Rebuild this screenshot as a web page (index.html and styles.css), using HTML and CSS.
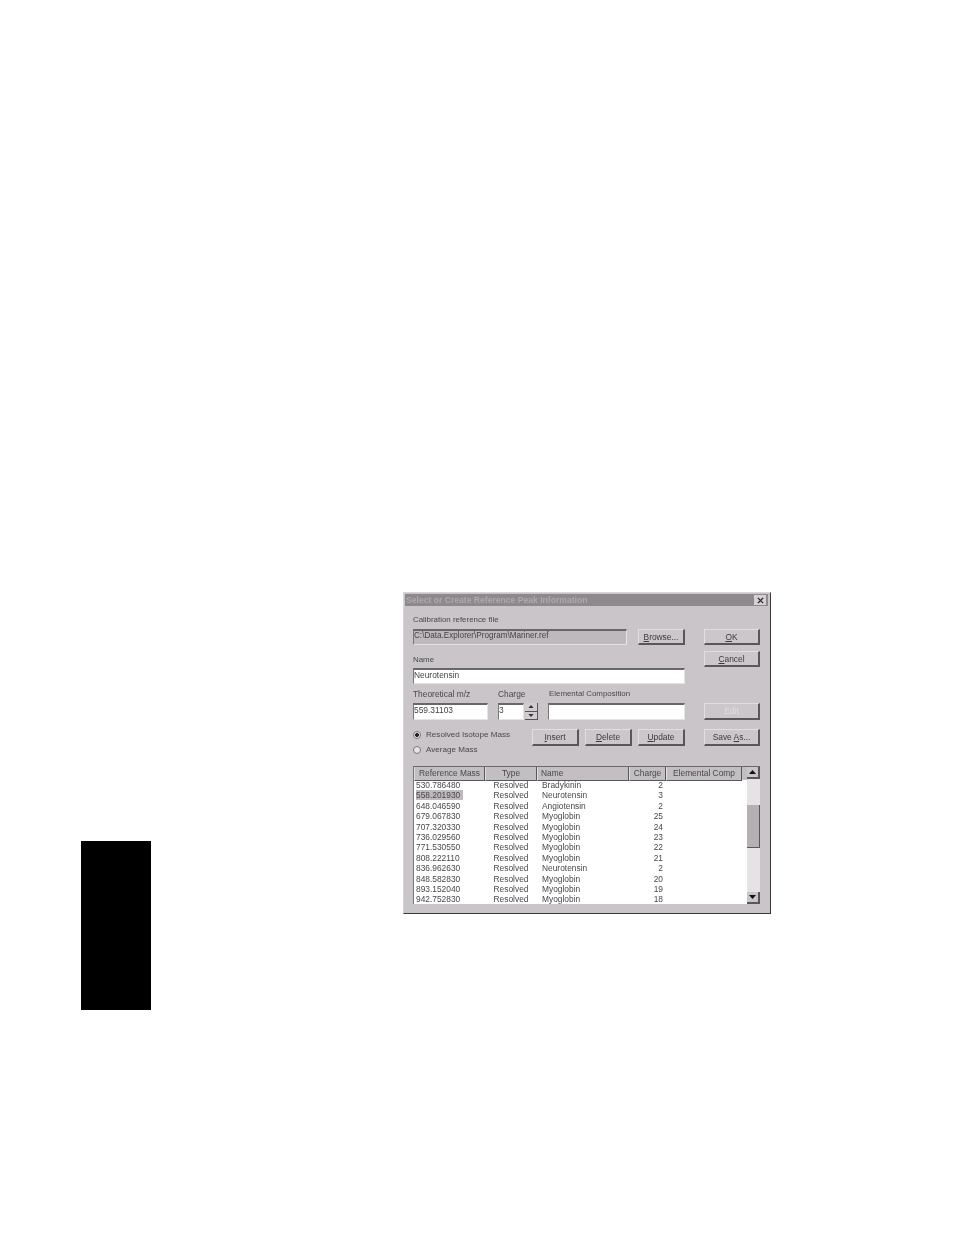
FILE: index.html
```html
<!DOCTYPE html>
<html lang="en">
<head>
<meta charset="utf-8">
<title>Select or Create Reference Peak Information</title>
<link rel="stylesheet" href="styles.css">
</head>
<body>
<main class="page">
  <div class="tab"></div>
  <section class="dialog">
    <header class="titlebar">
      <span class="title">Select or Create Reference Peak Information</span>
      <span class="close"><svg viewBox="0 0 8 8" width="7" height="7"><path d="M1 1L7 7M7 1L1 7" stroke="#222" stroke-width="1.5"/></svg></span>
    </header>
    <div class="body">
      <div class="top">
        <div class="form">
          <label class="lbl lbl-file lbl-narrow">Calibration reference file</label>
          <div class="row row-file">
            <div class="field field-file">C:\Data.Explorer\Program\Mariner.ref</div>
            <button class="btn"><u>B</u>rowse...</button>
          </div>
          <label class="lbl lbl-name lbl-narrow">Name</label>
          <div class="field field-name">Neurotensin</div>
          <div class="row row-labels">
            <span class="lbl col-mz">Theoretical m/z</span>
            <span class="lbl col-charge">Charge</span>
            <span class="lbl lbl-narrow lbl-comp">Elemental Composition</span>
          </div>
          <div class="row row-inputs">
            <div class="field col-mz">559.31103</div>
            <div class="charge-box">
              <div class="field field-charge">3</div>
              <div class="spin">
                <span class="spin-btn"><svg viewBox="0 0 7 4" width="6" height="3"><path d="M3.5 0L7 4H0Z" fill="#333"/></svg></span>
                <span class="spin-btn"><svg viewBox="0 0 7 4" width="6" height="3"><path d="M0 0H7L3.5 4Z" fill="#333"/></svg></span>
              </div>
            </div>
            <div class="field field-comp"></div>
          </div>
          <div class="row row-actions">
            <div class="radios">
              <div class="radio-row"><span class="radio on"></span>Resolved Isotope Mass</div>
              <div class="radio-row"><span class="radio"></span>Average Mass</div>
            </div>
            <div class="actions">
              <button class="btn"><u>I</u>nsert</button>
              <button class="btn"><u>D</u>elete</button>
              <button class="btn"><u>U</u>pdate</button>
            </div>
          </div>
        </div>
        <div class="side">
          <button class="btn btn-wide"><u>O</u>K</button>
          <button class="btn btn-wide"><u>C</u>ancel</button>
          <button class="btn btn-wide btn-off">Edit</button>
          <button class="btn btn-wide">Save <u>A</u>s...</button>
        </div>
      </div>
      <div class="list">
        <div class="list-main">
          <div class="thead">
            <span class="th">Reference Mass</span><span class="th">Type</span><span class="th th-left">Name</span><span class="th">Charge</span><span class="th">Elemental Comp</span>
          </div>
          <div class="tbody">
            <div class="tr"><span class="mass">530.786480</span><span class="type">Resolved</span><span class="name">Bradykinin</span><span class="chg">2</span></div>
            <div class="tr"><span class="mass"><span class="sel">558.201930</span></span><span class="type">Resolved</span><span class="name">Neurotensin</span><span class="chg">3</span></div>
            <div class="tr"><span class="mass">648.046590</span><span class="type">Resolved</span><span class="name">Angiotensin</span><span class="chg">2</span></div>
            <div class="tr"><span class="mass">679.067830</span><span class="type">Resolved</span><span class="name">Myoglobin</span><span class="chg">25</span></div>
            <div class="tr"><span class="mass">707.320330</span><span class="type">Resolved</span><span class="name">Myoglobin</span><span class="chg">24</span></div>
            <div class="tr"><span class="mass">736.029560</span><span class="type">Resolved</span><span class="name">Myoglobin</span><span class="chg">23</span></div>
            <div class="tr"><span class="mass">771.530550</span><span class="type">Resolved</span><span class="name">Myoglobin</span><span class="chg">22</span></div>
            <div class="tr"><span class="mass">808.222110</span><span class="type">Resolved</span><span class="name">Myoglobin</span><span class="chg">21</span></div>
            <div class="tr"><span class="mass">836.962630</span><span class="type">Resolved</span><span class="name">Neurotensin</span><span class="chg">2</span></div>
            <div class="tr"><span class="mass">848.582830</span><span class="type">Resolved</span><span class="name">Myoglobin</span><span class="chg">20</span></div>
            <div class="tr"><span class="mass">893.152040</span><span class="type">Resolved</span><span class="name">Myoglobin</span><span class="chg">19</span></div>
            <div class="tr"><span class="mass">942.752830</span><span class="type">Resolved</span><span class="name">Myoglobin</span><span class="chg">18</span></div>
          </div>
        </div>
        <div class="scroll">
          <span class="sb-btn"><svg viewBox="0 0 7 4" width="7" height="4"><path d="M3.5 0L7 4H0Z" fill="#111"/></svg></span>
          <div class="track"><span class="thumb"></span></div>
          <span class="sb-btn"><svg viewBox="0 0 7 4" width="7" height="4"><path d="M0 0H7L3.5 4Z" fill="#111"/></svg></span>
        </div>
      </div>
    </div>
  </section>
</main>
</body>
</html>
```
FILE: styles.css
```css
* { box-sizing: border-box; }
html, body { margin: 0; padding: 0; background: #fff; }
body { width: 954px; height: 1235px; overflow: hidden; }
.page { display: flex; align-items: flex-start; padding: 592px 0 0 81px; }
.tab { width: 70px; height: 169px; margin-top: 249px; background: #000; }
.dialog {
  width: 368px; height: 322px; margin-left: 252px; padding: 1px 2px 2px 1px;
  background: #c9c5c9;
  border: 1px solid #d8d4d8; border-right-color: #3a383a; border-bottom-color: #3a383a;
  font: 8.4px/10px "Liberation Sans", Arial, sans-serif; color: #4a484a;
  filter: blur(0.6px);
}
.titlebar { height: 12px; display: flex; align-items: center; justify-content: space-between; padding: 0 2px 0 1px; background: #8d898d; }
.title { color: #aeaaae; font-weight: 700; font-size: 8.6px; }
.close { width: 12px; height: 10px; display: flex; align-items: center; justify-content: center; background: #d4d0d4; }
.body { padding: 0 8px; }
.top { display: flex; gap: 19px; height: 143px; }
.form { width: 272px; display: flex; flex-direction: column; }
.form > * { flex: none; }
.lbl { display: block; height: 10px; white-space: nowrap; }
.lbl-narrow { font-size: 7.9px; }
.lbl-comp { margin-left: 1px; }
.lbl-file { margin-top: 9px; }
.row { display: flex; }
.row-file { gap: 11px; margin-top: 4px; }
.lbl-name { margin-top: 10px; }
.field {
  height: 16px; padding: 0; background: #fff; color: #444; white-space: nowrap;
  border: 1px solid #e6e3e6; border-top: 2px solid #6a676a; border-left: 1px solid #7a777a;
}
.field-file { width: 214px; background: #bdb9bd; font-size: 8.15px; }
.field-name { margin-top: 3px; width: 272px; }
.row-labels { margin-top: 5px; }
.col-mz { width: 75px; }
.col-charge { width: 50px; margin-left: 10px; }
.row-inputs { margin-top: 4px; }
.row-inputs .field { height: 17px; }
.charge-box { display: flex; gap: 1px; margin-left: 10px; width: 40px; }
.row-inputs .field-charge { width: 26px; }
.spin { width: 13px; display: flex; flex-direction: column; }
.spin-btn { flex: 1; display: flex; align-items: center; justify-content: center; background: #d0ccd0; border-right: 1px solid #555; border-bottom: 1px solid #555; }
.row-inputs .field-comp { width: 137px; margin-left: 10px; }
.row-actions { margin-top: 9px; justify-content: space-between; align-items: flex-start; }
.radios { display: flex; flex-direction: column; gap: 5px; padding-top: 1px; }
.radio-row { display: flex; align-items: center; gap: 5px; height: 10px; white-space: nowrap; font-size: 8.1px; }
.radio { width: 8px; height: 8px; border-radius: 50%; background: #e8e5e8; border: 1px solid #7a777a; }
.radio.on { background: radial-gradient(circle, #222 0 1.6px, #e8e5e8 2.2px); }
.actions { display: flex; gap: 6px; }
.btn {
  width: 47px; height: 17px; padding: 0; font: inherit; color: #3c3a3c; background: #cbc7cb;
  border: 1px solid #e2dfe2; border-right: 2px solid #5a575a; border-bottom: 2px solid #5a575a;
}
.row-file .btn { height: 16px; }
.side { display: flex; flex-direction: column; width: 56px; padding-top: 23px; }
.btn-wide { width: 56px; flex: none; }
.side .btn:nth-child(1) { height: 16px; }
.side .btn:nth-child(2) { height: 16px; margin-top: 6px; }
.side .btn:nth-child(3) { margin-top: 36px; }
.side .btn:nth-child(4) { margin-top: 9px; }
.btn-off { color: #e2dfe2; }
.list { display: flex; width: 347px; height: 138px; margin-top: 17px; background: #fff; border-top: 1px solid #6a676a; border-left: 1px solid #7a777a; }
.list-main { width: 333px; overflow: hidden; }
.thead { display: grid; grid-template-columns: 71px 52px 92px 37px 76px; height: 13px; background: #c2bec2; }
.th { text-align: center; border-left: 1px solid #e2dfe2; border-right: 1px solid #5a575a; border-bottom: 1px solid #5a575a; line-height: 13px; white-space: nowrap; }
.th-left { text-align: left; padding-left: 3px; }
.tbody { height: 124px; overflow: hidden; }
.tr { display: grid; grid-template-columns: 71px 52px 92px 37px; height: 10.4px; line-height: 10.4px; }
.mass { padding-left: 2px; }
.sel { background: #bdb9bd; padding-right: 3px; display: inline-block; height: 10px; line-height: 10px; }
.type { text-align: center; }
.name { padding-left: 5px; }
.chg { text-align: right; padding-right: 3px; }
.scroll { width: 13px; display: flex; flex-direction: column; }
.sb-btn { height: 12px; flex: none; display: flex; align-items: center; justify-content: center; background: #c9c5c9; border-right: 2px solid #5a575a; border-bottom: 2px solid #5a575a; }
.track { flex: 1; background: #e6e3e6; padding-top: 26px; }
.thumb { display: block; height: 43px; background: #b4b0b4; border-right: 1px solid #5a575a; border-bottom: 1px solid #5a575a; }
```
